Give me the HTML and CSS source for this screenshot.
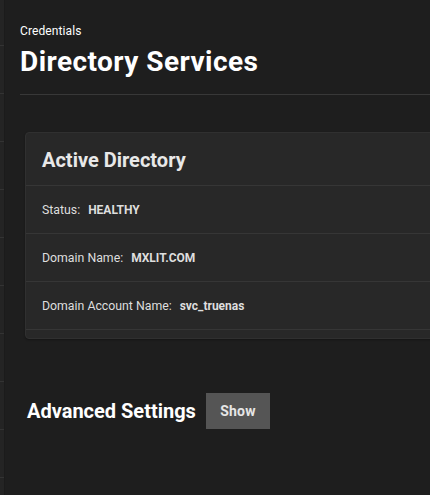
FILE: index.html
```html
<!DOCTYPE html>
<html>
<head>
<meta charset="utf-8">
<link rel="stylesheet" href="styles.css">
</head>
<body>
<div class="layout">
  <nav class="sidebar">
    <div class="nav-top"></div>
    <div class="nav-item"></div>
    <div class="nav-item"></div>
    <div class="nav-item"></div>
    <div class="nav-item"></div>
    <div class="nav-item"></div>
    <div class="nav-item"></div>
    <div class="nav-item"></div>
    <div class="nav-item"></div>
    <div class="nav-item"></div>
  </nav>
  <main class="main">
    <div class="crumb">Credentials</div>
    <h1 class="title">Directory Services</h1>
    <div class="divider"></div>
    <section class="card">
      <h2 class="card-title">Active Directory</h2>
      <div class="row"><span class="label">Status:</span><span class="value">HEALTHY</span></div>
      <div class="row"><span class="label">Domain Name:</span><span class="value">MXLIT.COM</span></div>
      <div class="row"><span class="label">Domain Account Name:</span><span class="value">svc_truenas</span></div>
      <div class="card-foot"></div>
    </section>
    <div class="advanced">
      <h2 class="adv-title">Advanced Settings</h2>
      <button class="btn">Show</button>
    </div>
  </main>
</div>
</body>
</html>
```
FILE: styles.css
```css
html, body {
  margin: 0;
  padding: 0;
  background: #1e1e1e;
  height: 100%;
  overflow: hidden;
}
.layout {
  display: flex;
  height: 495px;
}
.sidebar {
  width: 4px;
  flex: none;
  background: #242424;
  border-right: 1px solid #1b1b1b;
}
.nav-top {
  height: 45px;
  border-bottom: 1px solid #333;
}
.nav-item {
  height: 47px;
  border-bottom: 1px solid #333;
}
.main {
  flex: 1;
  min-width: 0;
  padding: 23px 0 0 15px;
  overflow: hidden;
  font-family: Roboto, "Liberation Sans", sans-serif;
  color: #fff;
}
.crumb {
  font-size: 12px;
  line-height: 16px;
  letter-spacing: 0.1px;
}
.title {
  margin: 7px 0 0;
  font-size: 28px;
  line-height: 32px;
  font-weight: 700;
  letter-spacing: 0.45px;
}
.divider {
  margin-top: 16px;
  height: 1px;
  background: #383838;
}
.card {
  margin: 37px 0 0 5px;
  width: 480px;
  background: #282828;
  border: 1px solid #303030;
  border-radius: 4px;
  box-shadow: 0 1px 2px rgba(0,0,0,0.3);
}
.card-title {
  margin: 0;
  height: 53px;
  box-sizing: border-box;
  padding: 15px 0 0 16px;
  font-size: 20px;
  line-height: 24px;
  font-weight: 700;
  color: #e8e8e8;
  border-bottom: 1px solid #363636;
}
.row {
  height: 47px;
  border-bottom: 1px solid #363636;
  display: flex;
  align-items: center;
  gap: 8px;
  padding-left: 16px;
  font-size: 12.3px;
  color: #dedede;
}
.value {
  font-size: 12px;
  font-weight: 700;
}
.card-foot {
  height: 8px;
}
.advanced {
  margin: 54px 0 0 7px;
  display: flex;
  align-items: center;
  gap: 10px;
}
.adv-title {
  margin: 0;
  font-size: 20px;
  line-height: 24px;
  font-weight: 700;
  color: #fff;
}
.btn {
  width: 64px;
  height: 36px;
  border: 0;
  border-radius: 0;
  background: #555;
  color: #e6e6e6;
  font-family: Roboto, "Liberation Sans", sans-serif;
  font-size: 14px;
  font-weight: 700;
  letter-spacing: 0.2px;
  padding: 0;
}
```
